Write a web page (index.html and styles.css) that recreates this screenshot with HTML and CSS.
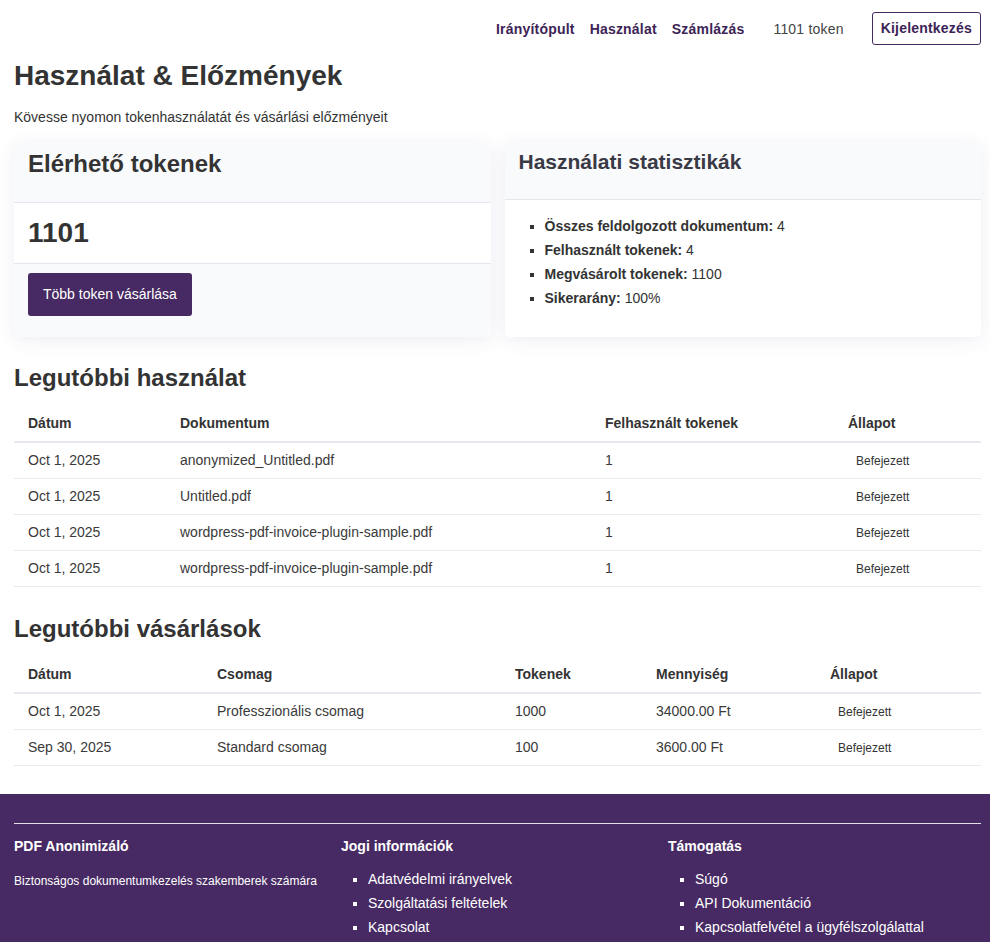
FILE: index.html
```html
<!DOCTYPE html>
<html lang="hu">
<head>
    <meta charset="UTF-8">
    <meta name="viewport" content="width=device-width, initial-scale=1.0">
    <title>Használat &amp; Előzmények - PDF Anonimizáló</title>
    <link rel="stylesheet" href="styles.css">
</head>
<body>
    <div class="container">
        <nav class="topnav">
            <a href="#" class="nav-link">Irányítópult</a>
            <a href="#" class="nav-link">Használat</a>
            <a href="#" class="nav-link">Számlázás</a>
            <span class="token-count">1101 token</span>
            <button class="logout-button">Kijelentkezés</button>
        </nav>

        <h1>Használat &amp; Előzmények</h1>
        <p class="subtitle">Kövesse nyomon tokenhasználatát és vásárlási előzményeit</p>

        <div class="cards">
            <div class="card">
                <div class="card-header">
                    <h2 class="card-title">Elérhető tokenek</h2>
                </div>
                <div class="card-body">
                    <div class="token-balance">1101</div>
                </div>
                <div class="card-footer">
                    <button class="buy-button">Több token vásárlása</button>
                </div>
            </div>
            <div class="card">
                <div class="card-header">
                    <h3 class="card-title small">Használati statisztikák</h3>
                </div>
                <div class="card-body">
                    <ul class="stats">
                        <li><strong>Összes feldolgozott dokumentum:</strong> 4</li>
                        <li><strong>Felhasznált tokenek:</strong> 4</li>
                        <li><strong>Megvásárolt tokenek:</strong> 1100</li>
                        <li><strong>Sikerarány:</strong> 100%</li>
                    </ul>
                </div>
            </div>
        </div>

        <h2 class="section-title">Legutóbbi használat</h2>
        <table class="history">
            <thead>
                <tr>
                    <th class="u-date">Dátum</th>
                    <th class="u-doc">Dokumentum</th>
                    <th class="u-tokens">Felhasznált tokenek</th>
                    <th>Állapot</th>
                </tr>
            </thead>
            <tbody>
                <tr><td>Oct 1, 2025</td><td>anonymized_Untitled.pdf</td><td>1</td><td><span class="badge">Befejezett</span></td></tr>
                <tr><td>Oct 1, 2025</td><td>Untitled.pdf</td><td>1</td><td><span class="badge">Befejezett</span></td></tr>
                <tr><td>Oct 1, 2025</td><td>wordpress-pdf-invoice-plugin-sample.pdf</td><td>1</td><td><span class="badge">Befejezett</span></td></tr>
                <tr><td>Oct 1, 2025</td><td>wordpress-pdf-invoice-plugin-sample.pdf</td><td>1</td><td><span class="badge">Befejezett</span></td></tr>
            </tbody>
        </table>

        <h2 class="section-title">Legutóbbi vásárlások</h2>
        <table class="history last">
            <thead>
                <tr>
                    <th class="p-date">Dátum</th>
                    <th class="p-package">Csomag</th>
                    <th class="p-tokens">Tokenek</th>
                    <th class="p-amount">Mennyiség</th>
                    <th>Állapot</th>
                </tr>
            </thead>
            <tbody>
                <tr><td>Oct 1, 2025</td><td>Professzionális csomag</td><td>1000</td><td>34000.00 Ft</td><td><span class="badge">Befejezett</span></td></tr>
                <tr><td>Sep 30, 2025</td><td>Standard csomag</td><td>100</td><td>3600.00 Ft</td><td><span class="badge">Befejezett</span></td></tr>
            </tbody>
        </table>
    </div>

    <footer class="site-footer">
        <div class="container">
            <hr class="footer-line">
            <div class="footer-columns">
                <div>
                    <h4>PDF Anonimizáló</h4>
                    <p class="footer-text">Biztonságos dokumentumkezelés szakemberek számára</p>
                </div>
                <div>
                    <h4>Jogi információk</h4>
                    <ul class="footer-links">
                        <li><a href="#">Adatvédelmi irányelvek</a></li>
                        <li><a href="#">Szolgáltatási feltételek</a></li>
                        <li><a href="#">Kapcsolat</a></li>
                    </ul>
                </div>
                <div>
                    <h4>Támogatás</h4>
                    <ul class="footer-links">
                        <li><a href="#">Súgó</a></li>
                        <li><a href="#">API Dokumentáció</a></li>
                        <li><a href="#">Kapcsolatfelvétel a ügyfélszolgálattal</a></li>
                    </ul>
                </div>
            </div>
        </div>
    </footer>
</body>
</html>
```

FILE: styles.css
```css
body {
    margin: 0;
    font-family: "Liberation Sans", Arial, sans-serif;
    font-size: 14px;
    color: #333333;
    background-color: #ffffff;
}
.container {
    padding: 0 9px 0 14px;
}
.topnav {
    display: flex;
    justify-content: flex-end;
    align-items: center;
    gap: 14px;
    padding: 12px 0;
    letter-spacing: 0.2px;
}
.nav-link {
    color: #3d2456;
    font-weight: bold;
    text-decoration: none;
}
.nav-link + .nav-link {
    margin-left: 1px;
}
.token-count {
    color: #444444;
    margin: 0 14px 0 15px;
}
.logout-button {
    font-family: inherit;
    font-size: 14px;
    font-weight: bold;
    letter-spacing: 0.2px;
    color: #3d2456;
    background-color: #ffffff;
    border: 1px solid #472a63;
    border-radius: 3px;
    padding: 7px 8px;
    line-height: 17px;
}
h1 {
    font-size: 28px;
    line-height: 34px;
    margin: 2px 0 14px;
}
.subtitle {
    margin: 0 0 14px;
    line-height: 20px;
}
.cards {
    display: grid;
    grid-template-columns: 1fr 1fr;
    gap: 14px;
    margin-bottom: 26px;
}
.card {
    display: flex;
    flex-direction: column;
    border-radius: 5px;
    background-color: #ffffff;
    box-shadow: 0 4px 18px rgba(80, 70, 140, 0.09);
    overflow: hidden;
}
.card-header {
    background-color: #f9fafb;
    border-bottom: 1px solid #e6e6ef;
    padding: 8px 14px 16px;
}
.card-title {
    font-size: 24px;
    line-height: 29px;
    margin: 0 0 8px;
}
.card-title.small {
    font-size: 21px;
    line-height: 26px;
    color: #3a3a46;
}
.card-body {
    padding: 14px;
}
.token-balance {
    font-size: 28px;
    font-weight: bold;
    line-height: 32px;
}
.card-footer {
    flex: 1;
    background-color: #f9fafb;
    border-top: 1px solid #e6e6ef;
    padding: 9px 14px;
}
.buy-button {
    font-family: inherit;
    font-size: 14px;
    color: #ffffff;
    background-color: #472a63;
    border: none;
    border-radius: 3px;
    padding: 12px 15px;
    line-height: 19px;
}
.stats {
    list-style: square;
    margin: 0 0 13px;
    padding-left: 26px;
}
.stats li {
    line-height: 24px;
}
.section-title {
    font-size: 24px;
    line-height: 29px;
    margin: 0 0 13px;
}
.history {
    width: 100%;
    border-collapse: collapse;
    table-layout: fixed;
    margin-bottom: 27px;
}
.history.last {
    margin-bottom: 0;
}
.history th,
.history td {
    box-sizing: border-box;
    text-align: left;
    padding: 10px 14px;
    line-height: 15px;
}
.history th {
    font-weight: bold;
    line-height: 16px;
    border-bottom: 2px solid #e7e7ef;
}
.history td {
    color: #3a3a3a;
    border-bottom: 1px solid #e9e9ef;
}
.u-date { width: 152px; }
.u-doc { width: 425px; }
.u-tokens { width: 243px; }
.p-date { width: 189px; }
.p-package { width: 298px; }
.p-tokens { width: 141px; }
.p-amount { width: 174px; }
.badge {
    display: inline-block;
    font-size: 12px;
    line-height: 13px;
    padding: 2px 8px 0;
    color: #333333;
    vertical-align: top;
}
.site-footer {
    background-color: #472a63;
    color: #ffffff;
    margin-top: 28px;
    padding: 29px 0 30px;
}
.footer-line {
    border: none;
    border-top: 1px solid rgba(255, 255, 255, 0.85);
    margin: 0 0 14px;
}
.footer-columns {
    display: grid;
    grid-template-columns: 1fr 1fr 1fr;
    gap: 14px;
}
.footer-columns h4 {
    font-size: 14px;
    line-height: 17px;
    margin: 0 0 12px;
}
.footer-text {
    font-size: 12px;
    line-height: 17px;
    margin: 18px 0 0;
}
.footer-links {
    list-style: square;
    margin: 0;
    padding-left: 27px;
}
.footer-links li {
    line-height: 24px;
}
.footer-links a {
    color: #ffffff;
    text-decoration: none;
}
```
